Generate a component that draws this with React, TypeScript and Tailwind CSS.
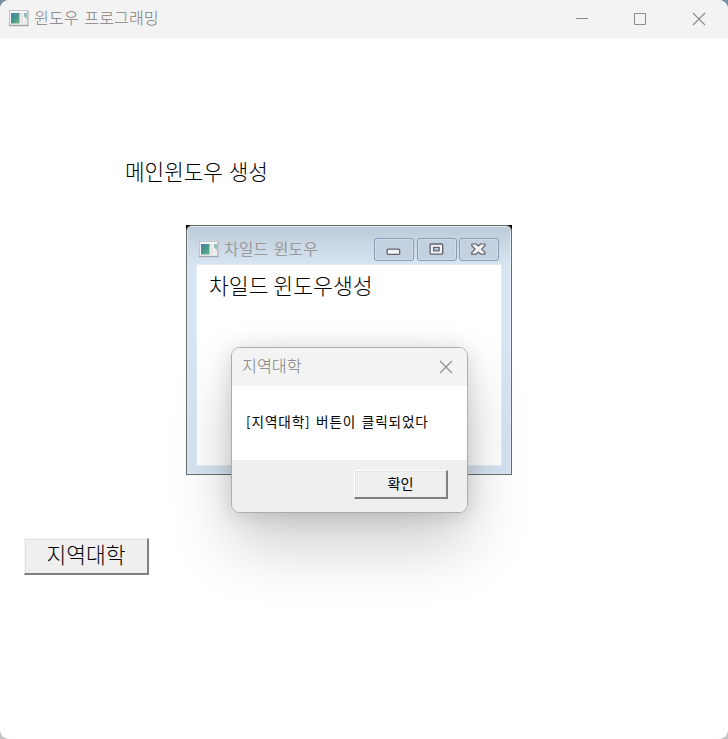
import type { ReactNode } from "react";

function AppIcon() {
  return (
    <svg width="20" height="17" viewBox="0 0 20 17" className="block shrink-0">
      <defs>
        <linearGradient id="pane" x1="0" y1="0" x2="1" y2="1">
          <stop offset="0" stopColor="#4a7fae" />
          <stop offset="0.55" stopColor="#4a9a88" />
          <stop offset="1" stopColor="#6cb67c" />
        </linearGradient>
      </defs>
      <rect x="0.5" y="0.5" width="18.5" height="15" fill="#f4f4f4" stroke="#c3c5c8" />
      <path d="M0 15.5H19.5" stroke="#a2a3a8" strokeWidth="1.4" />
      <path d="M19 1V16" stroke="#b4b5b9" strokeWidth="1" />
      <rect x="2" y="3" width="8.5" height="10.5" fill="url(#pane)" />
      <rect x="11.3" y="3" width="3" height="10.5" fill="#e4e7e6" />
      <path d="M15 3H18V9L15 6.5Z" fill="#94bcb8" />
      <rect x="15" y="9" width="3" height="4.5" fill="#e9ecea" />
    </svg>
  );
}

function CloseGlyph() {
  return (
    <svg width="14" height="14" viewBox="0 0 14 14" className="block" fill="none" stroke="#8c8c8c" strokeWidth="1.1">
      <path d="M1 1L13 13M13 1L1 13" />
    </svg>
  );
}

function AeroButton({ children }: { children: ReactNode }) {
  return (
    <div className="flex h-[23px] w-[40px] items-center justify-center rounded-[3px] border border-[#8b9bb9] bg-[#c3d1e0] shadow-[inset_0_0_0_1px_#d0dce8]">
      <svg width="18" height="14" viewBox="0.6 0.6 18 14" className="block">
        {children}
      </svg>
    </div>
  );
}

function ChildWindow() {
  return (
    <section className="absolute left-[186px] top-[225px] flex h-[250px] w-[326px] flex-col bg-black">
      <div className="flex h-full flex-col rounded-t-[6px] border border-[#6b6b6b] bg-[#d7e4f1] bg-linear-to-b from-[#bdcbd9] to-[#d7e4f1] to-[38px] px-[9px] pb-[8px] shadow-[inset_0_0_0_1px_#e2ebf4]">
        <header className="flex h-[38px] shrink-0 items-start justify-between pr-[3px]">
          <div className="flex items-start pl-[3px] pt-[15px]">
            <AppIcon />
            <span className="-mt-[2px] ml-[5px] text-[16px] leading-[18px] text-[#9a9a9a] [word-spacing:2px]">
              차일드 윈도우
            </span>
          </div>
          <div className="flex gap-[2.5px] pt-[12px]">
            <AeroButton>
              <rect x="2.7" y="6.7" width="12.6" height="5.2" rx="1" fill="#f2f3f5" stroke="#62626e" strokeWidth="1.3" />
            </AeroButton>
            <AeroButton>
              <rect x="2.7" y="1.6" width="12.6" height="10.2" rx="1" fill="#f2f3f5" stroke="#62626e" strokeWidth="1.3" />
              <rect x="6.2" y="5" width="5.6" height="3.4" fill="#b5c8df" stroke="#62626e" strokeWidth="1.2" />
            </AeroButton>
            <AeroButton>
              <path
                d="M2.4 1.6H6.8L9 3.8L11.2 1.6H15.6V3.4L12.2 6.7L15.6 10V11.8H11.2L9 9.6L6.8 11.8H2.4V10L5.8 6.7L2.4 3.4Z"
                fill="#f2f3f5"
                stroke="#62626e"
                strokeWidth="1.2"
                strokeLinejoin="round"
              />
            </AeroButton>
          </div>
        </header>
        <div className="flex-1 border border-[#e3ecf5] bg-white pl-[12px] pt-[5px] text-[21.6px] font-light leading-[30px] text-black">
          차일드 윈도우생성
        </div>
      </div>
    </section>
  );
}

function MessageBox() {
  return (
    <section className="absolute left-[231px] top-[347px] flex h-[166px] w-[237px] flex-col overflow-hidden rounded-[9px] border border-[#acacac] bg-white shadow-[0_32px_64px_rgba(0,0,0,0.2),0_2px_21px_rgba(0,0,0,0.14)]">
      <header className="flex h-[38px] shrink-0 items-center justify-between bg-[#f3f3f3] pl-[10px] pr-[14px]">
        <span className="-mt-[4px] text-[16.2px] font-light leading-[20px] text-[#7d7d7d]">지역대학</span>
        <CloseGlyph />
      </header>
      <div className="flex-1 pl-[14px] pt-[25px] text-[13.6px] leading-[20px] tracking-[0.9px] text-black [word-spacing:1.5px]">
        [지역대학] 버튼이 클릭되었다
      </div>
      <footer className="flex h-[52px] shrink-0 items-start justify-end bg-[#efefef] pr-[19px] pt-[10px]">
        <button className="h-[29px] w-[94px] border-b-2 border-l border-r-2 border-t border-b-[#808080] border-l-white border-r-[#808080] border-t-white bg-[#efefef] pb-[3px] text-[14.2px] leading-[20px] text-black shadow-[inset_1px_1px_0_#e2e2e2]">
          확인
        </button>
      </footer>
    </section>
  );
}

export default function App() {
  return (
    <div className="h-[739px] w-[728px] bg-[#7790a3] bg-linear-to-b from-[#7790a3] from-50% to-[#c4c4c4] to-50% font-['Noto_Sans_CJK_KR',sans-serif]">
      <main className="relative flex h-full flex-col overflow-hidden rounded-[9px] bg-white">
        <header className="flex h-[38px] shrink-0 items-center justify-between bg-[#f3f3f3] pl-[9px] pr-[22px]">
          <div className="-mt-[2px] flex items-start">
            <AppIcon />
            <span className="-mt-[3px] ml-[5px] text-[16.2px] font-light leading-[20px] text-[#7d7d7d] [word-spacing:2px]">
              윈도우 프로그래밍
            </span>
          </div>
          <div className="flex items-center gap-[45px]">
            <svg width="14" height="14" viewBox="0 0 14 14" className="block">
              <path d="M2 6.5H14" stroke="#8c8c8c" />
            </svg>
            <svg width="14" height="14" viewBox="0 0 14 14" className="block">
              <rect x="1.5" y="1.5" width="11" height="11" rx="0.6" fill="none" stroke="#8c8c8c" strokeWidth="1.1" />
            </svg>
            <CloseGlyph />
          </div>
        </header>
        <div className="flex flex-1 flex-col items-start pb-[164px] pl-[24px] pt-[118px]">
          <p className="ml-[101px] text-[21.3px] font-light leading-[30px] text-black [word-spacing:1px]">메인윈도우 생성</p>
          <button className="mt-auto h-[37px] w-[125px] border-b-2 border-l border-r-2 border-t border-b-[#808080] border-l-[#f5f5f5] border-r-[#808080] border-t-[#f5f5f5] bg-[#efefef] pb-[4px] text-[21.5px] font-light leading-[30px] text-black shadow-[inset_1px_1px_0_#e2e2e2]">
            지역대학
          </button>
        </div>
        <ChildWindow />
        <MessageBox />
      </main>
    </div>
  );
}
